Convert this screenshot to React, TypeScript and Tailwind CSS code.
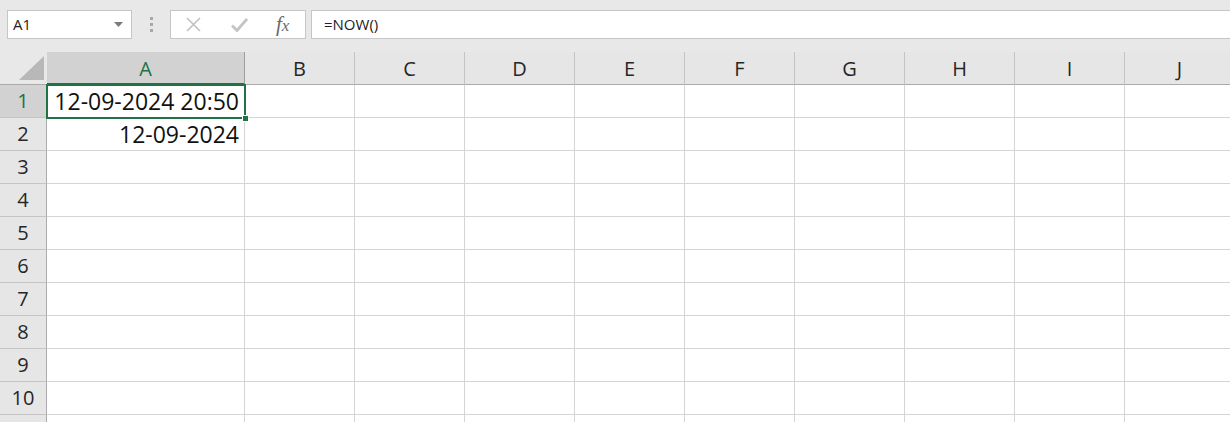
import React from "react";

const COLS = ["B", "C", "D", "E", "F", "G", "H", "I", "J"];
const ROWS = [1, 2, 3, 4, 5, 6, 7, 8, 9, 10, 11];

export default function App() {
  const font = { fontFamily: '"Open Sans", "Noto Sans", sans-serif' };
  return (
    <div className="w-[1230px] h-[422px] overflow-hidden bg-[#e8e8e8] relative" style={font}>
      {/* toolbar */}
      <div className="h-[52px] flex items-start pt-[10px] pl-[7px]">
        <div className="w-[125px] shrink-0 h-[29px] bg-white border border-[#c6c6c6] flex items-center justify-between pl-[5px] pr-[8px]">
          <span className="text-[15px] text-[#222]">A1</span>
          <svg width="9" height="5" viewBox="0 0 9 5">
            <path d="M0 0 L9 0 L4.5 5 Z" fill="#7a7a7a" />
          </svg>
        </div>
        <div className="w-[38px] shrink-0 h-[29px] flex flex-col items-center justify-center gap-[3px]">
          <div className="w-[3px] h-[3px] bg-[#a8a8a8]" />
          <div className="w-[3px] h-[3px] bg-[#a8a8a8]" />
          <div className="w-[3px] h-[3px] bg-[#a8a8a8]" />
        </div>
        <div className="w-[136px] shrink-0 h-[29px] bg-white border border-[#c6c6c6] flex items-center">
          <svg className="ml-[15px]" width="15" height="15" viewBox="0 0 15 15">
            <path d="M1 1 L14 14 M14 1 L1 14" stroke="#c0c0c0" strokeWidth="1.6" />
          </svg>
          <svg className="ml-[30px]" width="17" height="14" viewBox="0 0 17 14">
            <path d="M1 7.5 L6 12.5 L16 1" stroke="#c4c4c4" strokeWidth="2.8" fill="none" />
          </svg>
          <span
            className="ml-[28px] text-[21px] italic text-[#6a6a6a] leading-none"
            style={{ fontFamily: '"Liberation Serif", "DejaVu Serif", serif' }}
          >
            f<span className="text-[17px]">x</span>
          </span>
        </div>
        <div className="flex-1 ml-[5px] h-[29px] bg-white border border-[#c6c6c6] border-r-0 flex items-center pl-[12px]">
          <span className="text-[15px] text-[#222]">=NOW()</span>
        </div>
      </div>

      {/* header row */}
      <div className="flex h-[33px]">
        <div className="w-[47px] shrink-0 h-[33px] border-b border-[#ababab] flex items-end justify-end pr-[3px] pb-[4px]">
          <svg width="25" height="24" viewBox="0 0 25 24">
            <path d="M25 0 L25 24 L0 24 Z" fill="#b8b8b8" />
          </svg>
        </div>
        <div className="w-[198px] shrink-0 h-[33px] bg-[#d2d2d2] border-r border-[#9e9e9e] border-b-2 border-b-[#217346] flex items-center justify-center pt-[2px] text-[20px] text-[#217346]">
          A
        </div>
        {COLS.map((c) => (
          <div
            key={c}
            className="w-[110px] shrink-0 h-[33px] bg-[#e6e6e6] border-r border-[#c4c4c4] border-b border-b-[#ababab] flex items-center justify-center pt-[2px] text-[20px] text-[#262626]"
          >
            {c}
          </div>
        ))}
      </div>

      {/* body rows */}
      {ROWS.map((r) => (
        <div key={r} className="flex h-[33px] bg-white">
          <div
            className={
              r === 1
                ? "w-[47px] shrink-0 h-[33px] bg-[#d2d2d2] border-r border-r-[#ababab] border-b border-b-[#c4c4c4] flex items-center justify-center text-[20px] text-[#217346]"
                : "w-[47px] shrink-0 h-[33px] bg-[#e6e6e6] border-r border-r-[#ababab] border-b border-b-[#c4c4c4] flex items-center justify-center text-[20px] text-[#262626]"
            }
          >
            {r <= 10 ? r : ""}
          </div>
          <div className="w-[198px] shrink-0 h-[33px] border-r border-b border-[#d4d4d4] flex items-center justify-end pr-[5px] text-[23px] text-[#111]">
            {r === 1 ? "12-09-2024 20:50" : r === 2 ? "12-09-2024" : ""}
          </div>
          {COLS.map((c) => (
            <div key={c} className="w-[110px] shrink-0 h-[33px] border-r border-b border-[#d4d4d4]" />
          ))}
        </div>
      ))}

      {/* selection */}
      <div className="absolute left-[46px] top-[84px] w-[200px] h-[35px] border-2 border-[#217346] pointer-events-none" />
      <div className="absolute left-[242px] top-[115px] w-[7px] h-[7px] bg-[#217346] border border-white" />
    </div>
  );
}
